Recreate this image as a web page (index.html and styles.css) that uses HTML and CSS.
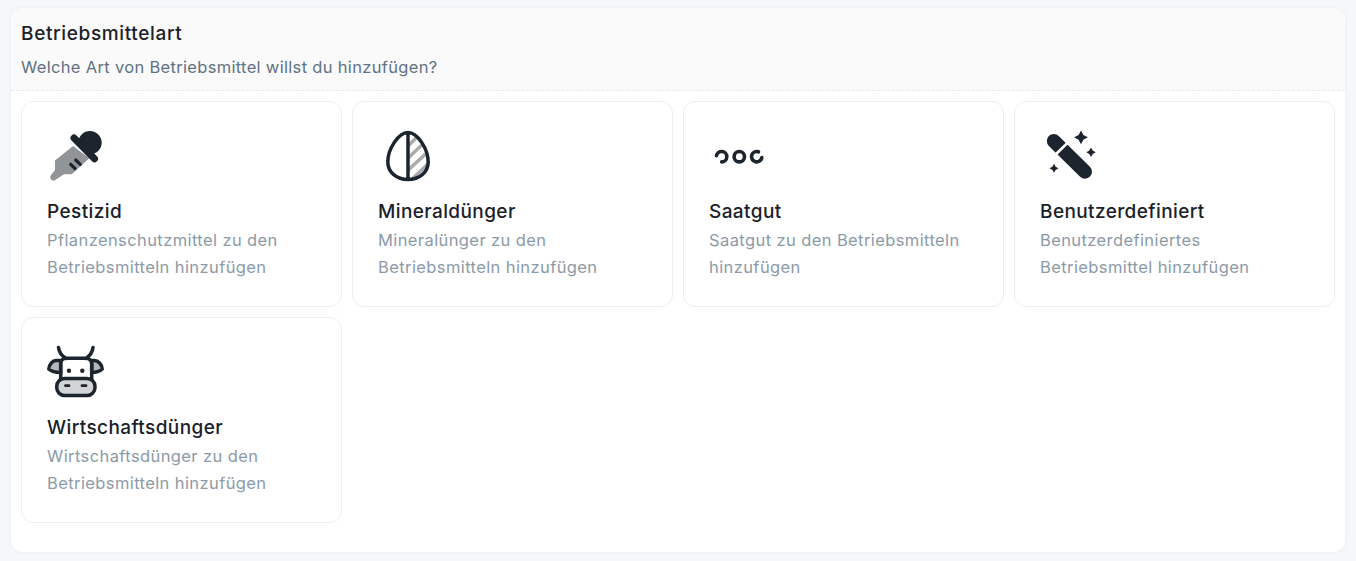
FILE: index.html
```html
<!DOCTYPE html>
<html lang="de">
<head>
  <meta charset="UTF-8">
  <title>Betriebsmittelart</title>
  <meta name="viewport" content="width=device-width, initial-scale=1.0">
  <link rel="stylesheet" href="styles.css">
</head>
<body>
  <div class="panel">
    <div class="panel-head">
      <div class="panel-title">Betriebsmittelart</div>
      <div class="panel-sub">Welche Art von Betriebsmittel willst du hinzufügen?</div>
    </div>
    <div class="type-grid">
      <div class="type-card">
        <svg class="type-icon" viewBox="0 0 60 60">
          <path class="fill-grey" d="M26 19 8 33.500 8 43l-4 5a3.500 3.500 0 0 0 2.300 5.700 3.500 3.500 0 0 0 3-1.400L17 47.300h7.700l17.600-16z"/>
          <path class="fill-dark" d="M31.300 15.400A11.700 11.700 0 1 1 43.300 27.400z"/>
          <path class="line-dark" stroke-width="7" d="M27 11 47.500 31.800"/>
          <path class="line-dark" stroke-width="3.200" d="M23.700 37.300 28 41.500M28.700 33l4.600 4.300"/>
        </svg>
        <div class="type-name">Pestizid</div>
        <div class="type-desc">Pflanzenschutzmittel zu den Betriebsmitteln hinzufügen</div>
      </div>
      <div class="type-card">
        <svg class="type-icon" viewBox="0 0 60 60">
          <clipPath id="egg-half"><path d="M30 5.500C39.500 5.500 50.200 22 50.200 35c0 10.500-9 17.500-20.200 17.500z"/></clipPath>
          <g clip-path="url(#egg-half)">
            <path class="line-grey" stroke-width="3.500" d="M28 21 42 7M28 33 48 14M28 45 54 21M30 56 56 31"/>
          </g>
          <path class="line-dark" stroke-width="3.500" d="M30 5.500C39.500 5.500 50.200 22 50.200 35c0 10.500-9 17.500-20.200 17.500S9.800 45.500 9.800 35C9.800 22 20.500 5.500 30 5.500zM30 5.500v47"/>
        </svg>
        <div class="type-name">Mineraldünger</div>
        <div class="type-desc">Mineralünger zu den Betriebsmitteln hinzufügen</div>
      </div>
      <div class="type-card">
        <svg class="type-icon" viewBox="0 0 60 60">
          <path class="line-dark" stroke-width="3.600" d="M7.500 28.700a5.200 5.200 0 1 1 5.200 6.200"/>
          <circle class="line-dark" stroke-width="3.600" cx="30.300" cy="29.700" r="5.200"/>
          <path class="line-dark" stroke-width="3.600" d="M49.500 24.800A5.200 5.200 0 1 0 52.800 30.600"/>
        </svg>
        <div class="type-name">Saatgut</div>
        <div class="type-desc">Saatgut zu den Betriebsmitteln hinzufügen</div>
      </div>
      <div class="type-card">
        <svg class="type-icon" viewBox="0 0 60 60">
          <path class="line-dark" stroke-width="14" d="M13.800 14 45 44.700"/>
          <path class="line-white" stroke-width="2.600" d="M12 31 29.500 14"/>
          <path class="fill-dark" d="M41 3.400 43.400 7.900 47.900 10.300 43.400 12.700 41 17.200 38.600 12.700 34.100 10.300 38.600 7.900z"/>
          <path class="fill-dark" d="M51 20.600 52.700 23.600 55.700 25.300 52.700 27 51 30 49.300 27 46.300 25.300 49.300 23.600z"/>
          <path class="fill-dark" d="M14 36.800 15.600 39.700 18.500 41.300 15.600 42.900 14 45.800 12.400 42.900 9.500 41.300 12.400 39.700z"/>
        </svg>
        <div class="type-name">Benutzerdefiniert</div>
        <div class="type-desc">Benutzerdefiniertes Betriebsmittel hinzufügen</div>
      </div>
      <div class="type-card">
        <svg class="type-icon" viewBox="0 0 60 60">
          <path class="line-edge ear" d="M13.700 17.500H9C5.500 17.500 2 21.500 1.800 26 5 29 9 29.500 13.700 29.500zM44.700 17.500h2.800c3.500 0 7.500 4 7.700 8.500-3.200 3-6 3.500-10.500 3.500z"/>
          <path class="line-dark" stroke-width="3.500" d="M11.500 4.500C12 9 15 13 19 15.300M46 4.500C45.500 9 42.500 13 39 15.300M19 15.300h20a5.500 5.500 0 0 1 5.700 5.500V37M13.700 37V20.800A5.500 5.500 0 0 1 19 15.300"/>
          <rect class="line-edge" x="9.700" y="35.500" width="38.300" height="17" rx="8"/>
          <circle class="fill-dark" cx="22" cy="27.700" r="2.200"/>
          <circle class="fill-dark" cx="35.300" cy="27.700" r="2.200"/>
          <path class="line-dark" stroke-width="2.800" d="M18.500 42.700h3.500M35 42.700h4"/>
        </svg>
        <div class="type-name">Wirtschaftsdünger</div>
        <div class="type-desc">Wirtschaftsdünger zu den Betriebsmitteln hinzufügen</div>
      </div>
    </div>
  </div>
</body>
</html>
```

FILE: styles.css
```css
html, body { margin: 0; padding: 0; }
body {
  background: #f6f7f9;
  font-family: Inter, "Liberation Sans", sans-serif;
  padding: 8px 11px 9px;
}
.panel {
  background: #fff;
  border-radius: 12px;
  box-shadow: 0 0 4px rgba(40, 50, 70, 0.06);
  overflow: hidden;
}
.panel-head {
  background: #fafafa;
  border-bottom: 1px dashed #e8eaed;
  padding: 11px 10px 9px;
  height: 62px;
}
.panel-title {
  font-size: 19px;
  font-weight: 500;
  letter-spacing: 0.65px;
  line-height: 30px;
  margin-bottom: 5px;
  color: #1a2129;
}
.panel-sub {
  font-size: 16.500px;
  letter-spacing: 0.32px;
  line-height: 27px;
  color: #5f7283;
}
.type-grid {
  display: grid;
  grid-template-columns: repeat(4, 1fr);
  gap: 10px;
  padding: 10px 10px 29px;
}
.type-card {
  border: 1px solid #eceef0;
  border-radius: 12px;
  padding: 25px;
  background: #fff;
}
.type-icon {
  display: block;
  width: 60px;
  height: 60px;
  margin-bottom: 11px;
}
.type-name {
  font-size: 19px;
  font-weight: 500;
  letter-spacing: 0.4px;
  line-height: 28px;
  margin-bottom: 1px;
  color: #1a2129;
}
.type-desc {
  font-size: 16.500px;
  letter-spacing: 0.4px;
  line-height: 27px;
  color: #8c9aa7;
}
.fill-dark { fill: #1c242d; }
.fill-grey { fill: #929598; }
.line-dark, .line-grey, .line-white { fill: none; stroke-linecap: round; stroke-linejoin: round; }
.line-dark { stroke: #1c242d; }
.line-grey { stroke: #a9acaf; stroke-linecap: butt; }
.line-white { stroke: #fff; stroke-linecap: butt; }
.line-edge { fill: #d2d4d6; stroke: #1c242d; stroke-width: 3.500; }
.ear { fill: #b4b6b9; }
```
